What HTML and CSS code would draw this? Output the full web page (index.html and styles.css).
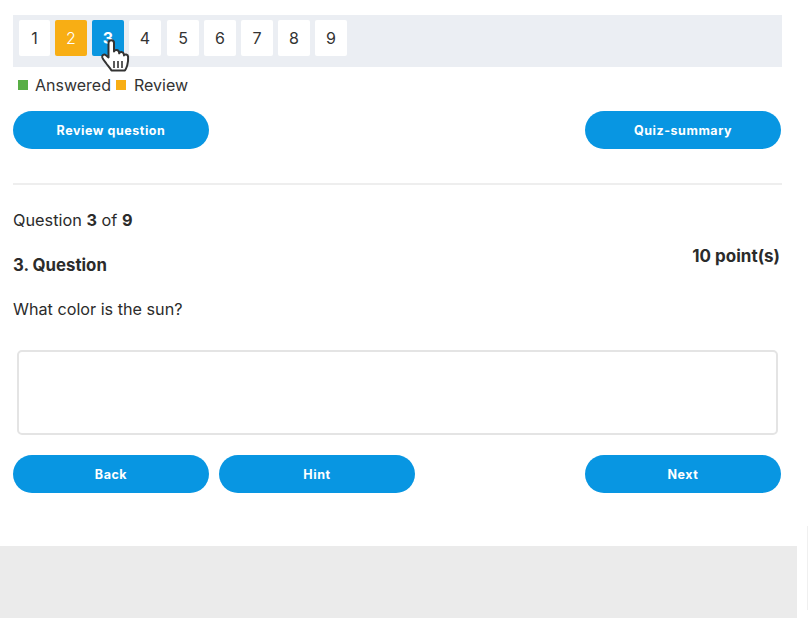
FILE: index.html
```html
<!DOCTYPE html>
<html lang="en">
<head>
   <meta charset="UTF-8">
   <meta name="viewport" content="width=device-width, initial-scale=1.0">
   <title>Quiz</title>
   <link rel="stylesheet" href="styles.css">
</head>

<body>

   <div class="quiz">

       <!-- Question list -->
       <div class="question-list">
           <span class="num first">1</span>
           <span class="num review">2</span>
           <span class="num current">3
               <svg class="hand" width="32" height="36" viewBox="0 0 32 36">
                   <path d="M8.500 5c0-3.600 5.500-3.600 5.500 0v8.500c.6-2.300 4.700-2 5 .6l.2 1.200c.7-2 4.300-1.700 4.600.9l.2 1.200c.8-1.600 3.900-1.200 4.100 1.300.2 3.200 0 6-.9 8.800-.6 2-1.300 3.500-2.300 5H11.500c-1.300-2.200-3.300-4.500-5.200-7-1.400-1.900-3.400-4.200-4-6-.7-2.300 1.800-3.700 3.600-2.300l2.600 2.200z" fill="#fff" stroke="#333" stroke-width="2" stroke-linejoin="round"/>
                   <path d="M14 23v7M18 23v7M22 23v7" fill="none" stroke="#333" stroke-width="1.600"/>
               </svg>
           </span>
           <span class="num fourth">4</span>
           <span class="num">5</span>
           <span class="num">6</span>
           <span class="num">7</span>
           <span class="num">8</span>
           <span class="num">9</span>
       </div>

       <div class="legend">
           <span class="swatch green"></span>
           <span>Answered</span>
           <span class="swatch orange"></span>
           <span class="legend-review">Review</span>
       </div>

       <div class="button-row top-row">
           <button class="btn">Review question</button>
           <button class="btn push-right">Quiz-summary</button>
       </div>

       <hr class="divider">

       <p class="counter">Question <b>3</b> of <b>9</b></p>

       <div class="question-head">
           <h2>3. Question</h2>
           <span class="points">10 point(s)</span>
       </div>

       <p class="question-text">What color is the sun?</p>

       <div class="answer-box"></div>

       <div class="button-row">
           <button class="btn">Back</button>
           <button class="btn">Hint</button>
           <button class="btn push-right">Next</button>
       </div>
   </div>

   <div class="footer-band"></div>
   <div class="edge-line"></div>

</body>
</html>
```

FILE: styles.css
```css
html, body {
    height: 100%;
}
body {
    margin: 0;
    background-color: #fff;
    color: #2b2b2b;
    font-family: Inter, "Liberation Sans", sans-serif;
    font-size: 16px;
    overflow: hidden;
}
.quiz {
    width: 782px;
    height: 546px;
    padding: 15px 0 0 13px;
    box-sizing: border-box;
}
.question-list {
    display: flex;
    gap: 5px;
    height: 52px;
    padding: 5px;
    box-sizing: border-box;
    background-color: #ebeef3;
}
.num {
    position: relative;
    width: 32px;
    height: 36px;
    display: flex;
    align-items: center;
    justify-content: center;
    background-color: #fff;
    border-radius: 2px;
    font-size: 16px;
    color: #333;
}
.num.first {
    width: 31px;
    margin-left: 1px;
}
.num.fourth {
    margin-right: 1px;
}
.num.review {
    background-color: #f8ae14;
    color: #fff;
    font-weight: 300;
}
.num.current {
    background-color: #0a96e0;
    color: #fff;
    font-weight: 700;
}
.hand {
    position: absolute;
    left: 8px;
    top: 18px;
}
.legend {
    display: flex;
    align-items: center;
    height: 20px;
    margin: 8px 0 0 5px;
    color: #333;
}
.legend span + span {
    margin-left: 7px;
}
.legend .swatch.orange {
    margin-left: 5px;
}
.legend .legend-review {
    margin-left: 8px;
}
.swatch {
    width: 10px;
    height: 10px;
}
.green {
    background-color: #58ae45;
}
.orange {
    background-color: #f8ae14;
}
.button-row {
    display: flex;
    gap: 10px;
}
.top-row {
    margin-top: 16px;
}
.btn {
    width: 196px;
    height: 38px;
    padding: 0;
    border: none;
    border-radius: 19px;
    background-color: #0896e2;
    color: #fff;
    font-family: Inter, "Liberation Sans", sans-serif;
    font-size: 12.500px;
    font-weight: 700;
    letter-spacing: 0.550px;
    cursor: pointer;
}
.push-right {
    margin-left: auto;
    margin-right: 1px;
}
.divider {
    height: 2px;
    margin: 34px 0 0;
    border: none;
    background-color: #eeeeee;
}
.counter {
    margin: 25px 0 0;
    font-size: 16.300px;
    line-height: 20px;
}
.question-head {
    display: flex;
    justify-content: space-between;
    height: 36px;
    margin-top: 16px;
}
.question-head h2 {
    margin: 9px 0 0;
    font-size: 16.800px;
    line-height: 20px;
}
.points {
    margin-right: 2px;
    font-size: 17px;
    font-weight: 700;
    line-height: 20px;
}
.question-text {
    margin: 17px 0 0;
    font-size: 16.200px;
    line-height: 20px;
}
.answer-box {
    width: 761px;
    height: 85px;
    margin: 31px 0 0 4px;
    box-sizing: border-box;
    background-color: #fff;
    border: 2px solid #e4e4e4;
    border-radius: 5px;
}
.answer-box + .button-row {
    margin-top: 20px;
}
.footer-band {
    width: 797px;
    height: 72px;
    background-color: #ebebeb;
}
.edge-line {
    position: absolute;
    left: 807px;
    top: 526px;
    width: 1px;
    height: 84px;
    background-color: #f0f0f0;
}
```
